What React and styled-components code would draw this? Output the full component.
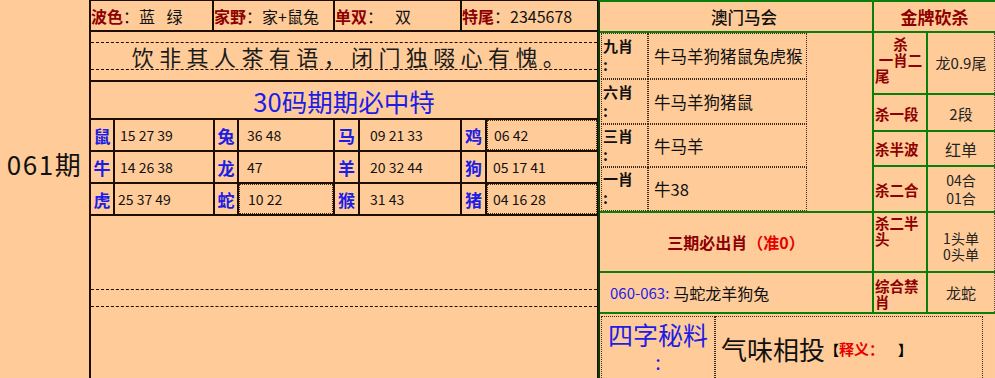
import React from "react";
import styled, { createGlobalStyle } from "styled-components";

const FONT = `"Noto Sans CJK SC", "Noto Sans", sans-serif`;
const PEACH = "#ffcc99";
const DARK = "#1e0e02";
const GREEN = "#0a7d0a";
const EDGE = "#0b3a0b";
const RED = "#8e0000";
const BRIGHT_RED = "#e60000";
const BLUE = "#1d1de6";
const DOT = "1px dotted #3a2a1a";

const Global = createGlobalStyle`
  html, body { margin: 0; padding: 0; background: ${PEACH}; }
  body { font-family: ${FONT}; color: #111; }
  * { box-sizing: border-box; }
`;

const Page = styled.div`
  display: flex;
  width: 995px;
  height: 378px;
  overflow: hidden;
  background: ${PEACH};
`;

const IssueCol = styled.div`
  width: 89px;
  flex: none;
  display: flex;
  justify-content: center;
  padding-top: 148px;
  font-size: 26px;
  line-height: 32px;
  letter-spacing: 1.5px;
  color: #111;
`;

const LeftPanel = styled.div`
  width: 509px;
  flex: none;
  border-left: 2px solid ${DARK};
  border-right: 1px solid ${DARK};
  display: flex;
  flex-direction: column;
`;

const InfoRow = styled.div`
  display: grid;
  grid-template-columns: 121px 119px 125px 1fr;
  column-gap: 2px;
  background: ${DARK};
  border-top: 1px solid ${DARK};
  border-bottom: 2px solid ${DARK};
  height: 32px;
`;

const InfoCell = styled.div`
  background: ${PEACH};
  display: flex;
  align-items: center;
  font-size: 16px;
  white-space: nowrap;
`;

const Key = styled.span`
  color: ${RED};
  font-weight: 700;
`;

const Val = styled.span`
  margin-left: ${(p) => p.$gap || 0}px;
  word-spacing: ${(p) => p.$ws || 0}px;
`;

const QuoteSection = styled.div`
  height: 50px;
  border-bottom: 2px solid ${DARK};
  padding-top: 10px;
`;

const DashedBand = styled.div`
  height: ${(p) => p.$h}px;
  border-top: 1px dashed ${DARK};
  border-bottom: 1px dashed ${DARK};
  display: flex;
  align-items: center;
  justify-content: center;
`;

const Quote = styled.span`
  font-size: 22px;
  letter-spacing: 5.4px;
  color: #1a1a1a;
  padding-left: 14px;
`;

const Title = styled.div`
  height: 38px;
  border-bottom: 2px solid ${DARK};
  display: flex;
  align-items: center;
  justify-content: center;
  font-size: 25.5px;
  color: ${BLUE};
  padding-top: 1px;
`;

const ZodiacGrid = styled.div`
  display: grid;
  grid-template-columns: 22px 98px 22px 94px 23px 100px 23px 1fr;
  grid-template-rows: repeat(3, 30px);
  gap: 2px;
  background: ${DARK};
  border-bottom: 2px solid ${DARK};
  height: 96px;
`;

const ZLabel = styled.div`
  background: ${PEACH};
  display: flex;
  align-items: center;
  justify-content: center;
  color: ${BLUE};
  font-weight: 700;
  font-size: 17px;
`;

const ZNums = styled.div`
  background: ${PEACH};
  display: flex;
  align-items: center;
  padding-left: ${(p) => p.$pad || 6}px;
  font-size: 14px;
  color: #111;
  border: ${(p) => (p.$dotted ? DOT : "none")};
`;

const EmptyArea = styled.div`
  flex: 1;
  padding-top: 73px;
`;

const RightPanel = styled.div`
  flex: 1;
  border-left: 2px solid ${EDGE};
  border-top: 2px solid ${GREEN};
  background: ${GREEN};
  display: grid;
  grid-template-columns: 272px 52px 67px;
  grid-template-rows: 29px 60px 35px 33px 44px 58px 39px 64px;
  gap: 2px;
`;

const Cell = styled.div`
  background: ${PEACH};
  display: flex;
  flex-direction: column;
  justify-content: ${(p) => p.$v || "center"};
  align-items: ${(p) => p.$h || "center"};
  grid-column: ${(p) => p.$col || "auto"};
  grid-row: ${(p) => p.$row || "auto"};
  padding-top: ${(p) => p.$pt || 0}px;
  padding-left: ${(p) => p.$pl || 0}px;
`;

const HeadText = styled.span`
  font-size: ${(p) => p.$size || 16}px;
  font-weight: ${(p) => (p.$red ? 700 : 500)};
  color: ${(p) => (p.$red ? RED : "#111")};
`;

const NestTable = styled.div`
  display: grid;
  grid-template-columns: 47px 159px;
  grid-template-rows: 46px 45px 43px 44px;
  margin-left: 1px;
  height: 100%;
  align-self: flex-start;
`;

const NLabel = styled.div`
  border: ${DOT};
  display: flex;
  flex-direction: column;
  justify-content: center;
  font-size: 15px;
  font-weight: 700;
  line-height: 19px;
  color: #111;
  padding-left: 1px;
  padding-bottom: 2px;
`;

const NValue = styled.div`
  border: ${DOT};
  display: flex;
  align-items: center;
  padding-left: 5px;
  font-size: 16.5px;
  color: #111;
`;

const Must = styled.span`
  font-size: 16px;
  font-weight: 700;
  color: ${RED};
`;

const MustAcc = styled.span`
  color: ${BRIGHT_RED};
`;

const Range = styled.div`
  display: flex;
  align-items: center;
  align-self: stretch;
  padding-left: 10px;
  font-size: 16px;
  color: #111;
`;

const RangeKey = styled.span`
  color: ${BLUE};
  font-size: 15px;
  margin-right: 4px;
`;

const KillLabel = styled.div`
  font-size: 14.5px;
  font-weight: 700;
  line-height: 16px;
  color: ${RED};
  align-self: stretch;
  display: flex;
  flex-direction: column;
  padding-left: 1px;
  white-space: nowrap;
`;

const KLine = styled.span`
  text-align: ${(p) => p.$align || "left"};
`;

const ValueCell = styled(Cell)`
  border-right: 1px dotted #5a4a3a;
  font-size: ${(p) => p.$fs || 15}px;
  line-height: ${(p) => p.$lh || 18}px;
  color: #222;
  text-align: center;
`;

const SecretBox = styled.div`
  display: grid;
  grid-template-columns: 114px 268px;
  margin: 2px 0 0 1px;
  align-self: flex-start;
  height: 62px;
`;

const SecretKey = styled.div`
  border: ${DOT};
  border-bottom: none;
  display: flex;
  flex-direction: column;
  align-items: center;
  color: ${BLUE};
  padding-top: 2px;
`;

const SecretTitle = styled.span`
  font-size: 25px;
  line-height: 30px;
`;

const SecretColon = styled.span`
  font-size: 20px;
  line-height: 22px;
  margin-top: 2px;
`;

const SecretVal = styled.div`
  border: ${DOT};
  border-bottom: none;
  display: flex;
  align-items: center;
  padding-left: 5px;
  padding-top: 2px;
`;

const Idiom = styled.span`
  font-size: 26px;
  color: #111;
`;

const Bracket = styled.span`
  font-size: 14px;
  font-weight: 900;
  color: #000;
`;

const Explain = styled.span`
  font-size: 15px;
  font-weight: 700;
  color: ${BRIGHT_RED};
  margin-right: 14px;
`;

const zodiacRows = [
  [
    { l: "鼠", n: "15 27 39", pad: 5 },
    { l: "兔", n: "36 48", pad: 8 },
    { l: "马", n: "09 21 33", pad: 10 },
    { l: "鸡", n: "06 42", pad: 6, dotted: true },
  ],
  [
    { l: "牛", n: "14 26 38", pad: 5 },
    { l: "龙", n: "47", pad: 8 },
    { l: "羊", n: "20 32 44", pad: 10 },
    { l: "狗", n: "05 17 41", pad: 6 },
  ],
  [
    { l: "虎", n: "25 37 49", pad: 3 },
    { l: "蛇", n: "10 22", pad: 8, dotted: true },
    { l: "猴", n: "31 43", pad: 10 },
    { l: "猪", n: "04 16 28", pad: 5, dotted: true },
  ],
];

const nestRows = [
  ["九肖", "牛马羊狗猪鼠兔虎猴"],
  ["六肖", "牛马羊狗猪鼠"],
  ["三肖", "牛马羊"],
  ["一肖", "牛38"],
];

export default function App() {
  return (
    <>
      <Global />
      <Page>
        <IssueCol>061期</IssueCol>

        <LeftPanel>
          <InfoRow>
            <InfoCell>
              <Key>波色</Key>：<Val $ws={8}>蓝 绿</Val>
            </InfoCell>
            <InfoCell>
              <Key>家野</Key>：<Val>家+鼠兔</Val>
            </InfoCell>
            <InfoCell>
              <Key>单双</Key>：<Val $gap={12}>双</Val>
            </InfoCell>
            <InfoCell>
              <Key>特尾</Key>：<Val>2345678</Val>
            </InfoCell>
          </InfoRow>

          <QuoteSection>
            <DashedBand $h={28}>
              <Quote>饮非其人茶有语，闭门独啜心有愧。</Quote>
            </DashedBand>
          </QuoteSection>

          <Title>30码期期必中特</Title>

          <ZodiacGrid>
            {zodiacRows.map((row) =>
              row.map((c) => (
                <React.Fragment key={c.l}>
                  <ZLabel>{c.l}</ZLabel>
                  <ZNums $pad={c.pad} $dotted={c.dotted}>
                    {c.n}
                  </ZNums>
                </React.Fragment>
              ))
            )}
          </ZodiacGrid>

          <EmptyArea>
            <DashedBand $h={18} />
          </EmptyArea>
        </LeftPanel>

        <RightPanel>
          <Cell $pl={16}>
            <HeadText $size={16.5}>澳门马会</HeadText>
          </Cell>
          <Cell $col="2 / span 2">
            <HeadText $size={17} $red>
              金牌砍杀
            </HeadText>
          </Cell>

          <Cell $row="2 / span 4" $h="flex-start" $v="flex-start">
            <NestTable>
              {nestRows.map(([k, v]) => (
                <React.Fragment key={k}>
                  <NLabel>
                    <span>{k}</span>
                    <span>:</span>
                  </NLabel>
                  <NValue>{v}</NValue>
                </React.Fragment>
              ))}
            </NestTable>
          </Cell>

          <Cell $v="flex-start" $pt={3}>
            <KillLabel>
              <KLine $align="center">杀</KLine>
              <KLine $align="center">一肖二</KLine>
              <KLine>尾</KLine>
            </KillLabel>
          </Cell>
          <ValueCell>龙0.9尾</ValueCell>

          <Cell $pt={2}>
            <KillLabel>
              <KLine>杀一段</KLine>
            </KillLabel>
          </Cell>
          <ValueCell $pt={2}>2段</ValueCell>

          <Cell>
            <KillLabel>
              <KLine>杀半波</KLine>
            </KillLabel>
          </Cell>
          <ValueCell $fs={16}>红单</ValueCell>

          <Cell $pt={2}>
            <KillLabel>
              <KLine>杀二合</KLine>
            </KillLabel>
          </Cell>
          <ValueCell $fs={14} $lh={18}>
            <span>04合</span>
            <span>01合</span>
          </ValueCell>

          <Cell>
            <Must>
              三期必出肖<MustAcc>（准0）</MustAcc>
            </Must>
          </Cell>
          <Cell $v="flex-start" $pt={2}>
            <KillLabel>
              <KLine>杀二半</KLine>
              <KLine>头</KLine>
            </KillLabel>
          </Cell>
          <ValueCell $fs={14} $lh={16} $pt={8}>
            <span>1头单</span>
            <span>0头单</span>
          </ValueCell>

          <Cell $h="flex-start">
            <Range>
              <RangeKey>060-063:</RangeKey>马蛇龙羊狗兔
            </Range>
          </Cell>
          <Cell $pt={2}>
            <KillLabel>
              <KLine>综合禁</KLine>
              <KLine>肖</KLine>
            </KillLabel>
          </Cell>
          <ValueCell $fs={15}>龙蛇</ValueCell>

          <Cell $col="1 / span 3" $h="flex-start" $v="flex-start">
            <SecretBox>
              <SecretKey>
                <SecretTitle>四字秘料</SecretTitle>
                <SecretColon>:</SecretColon>
              </SecretKey>
              <SecretVal>
                <Idiom>气味相投</Idiom>
                <Bracket>【</Bracket>
                <Explain>释义：</Explain>
                <Bracket>】</Bracket>
              </SecretVal>
            </SecretBox>
          </Cell>
        </RightPanel>
      </Page>
    </>
  );
}
